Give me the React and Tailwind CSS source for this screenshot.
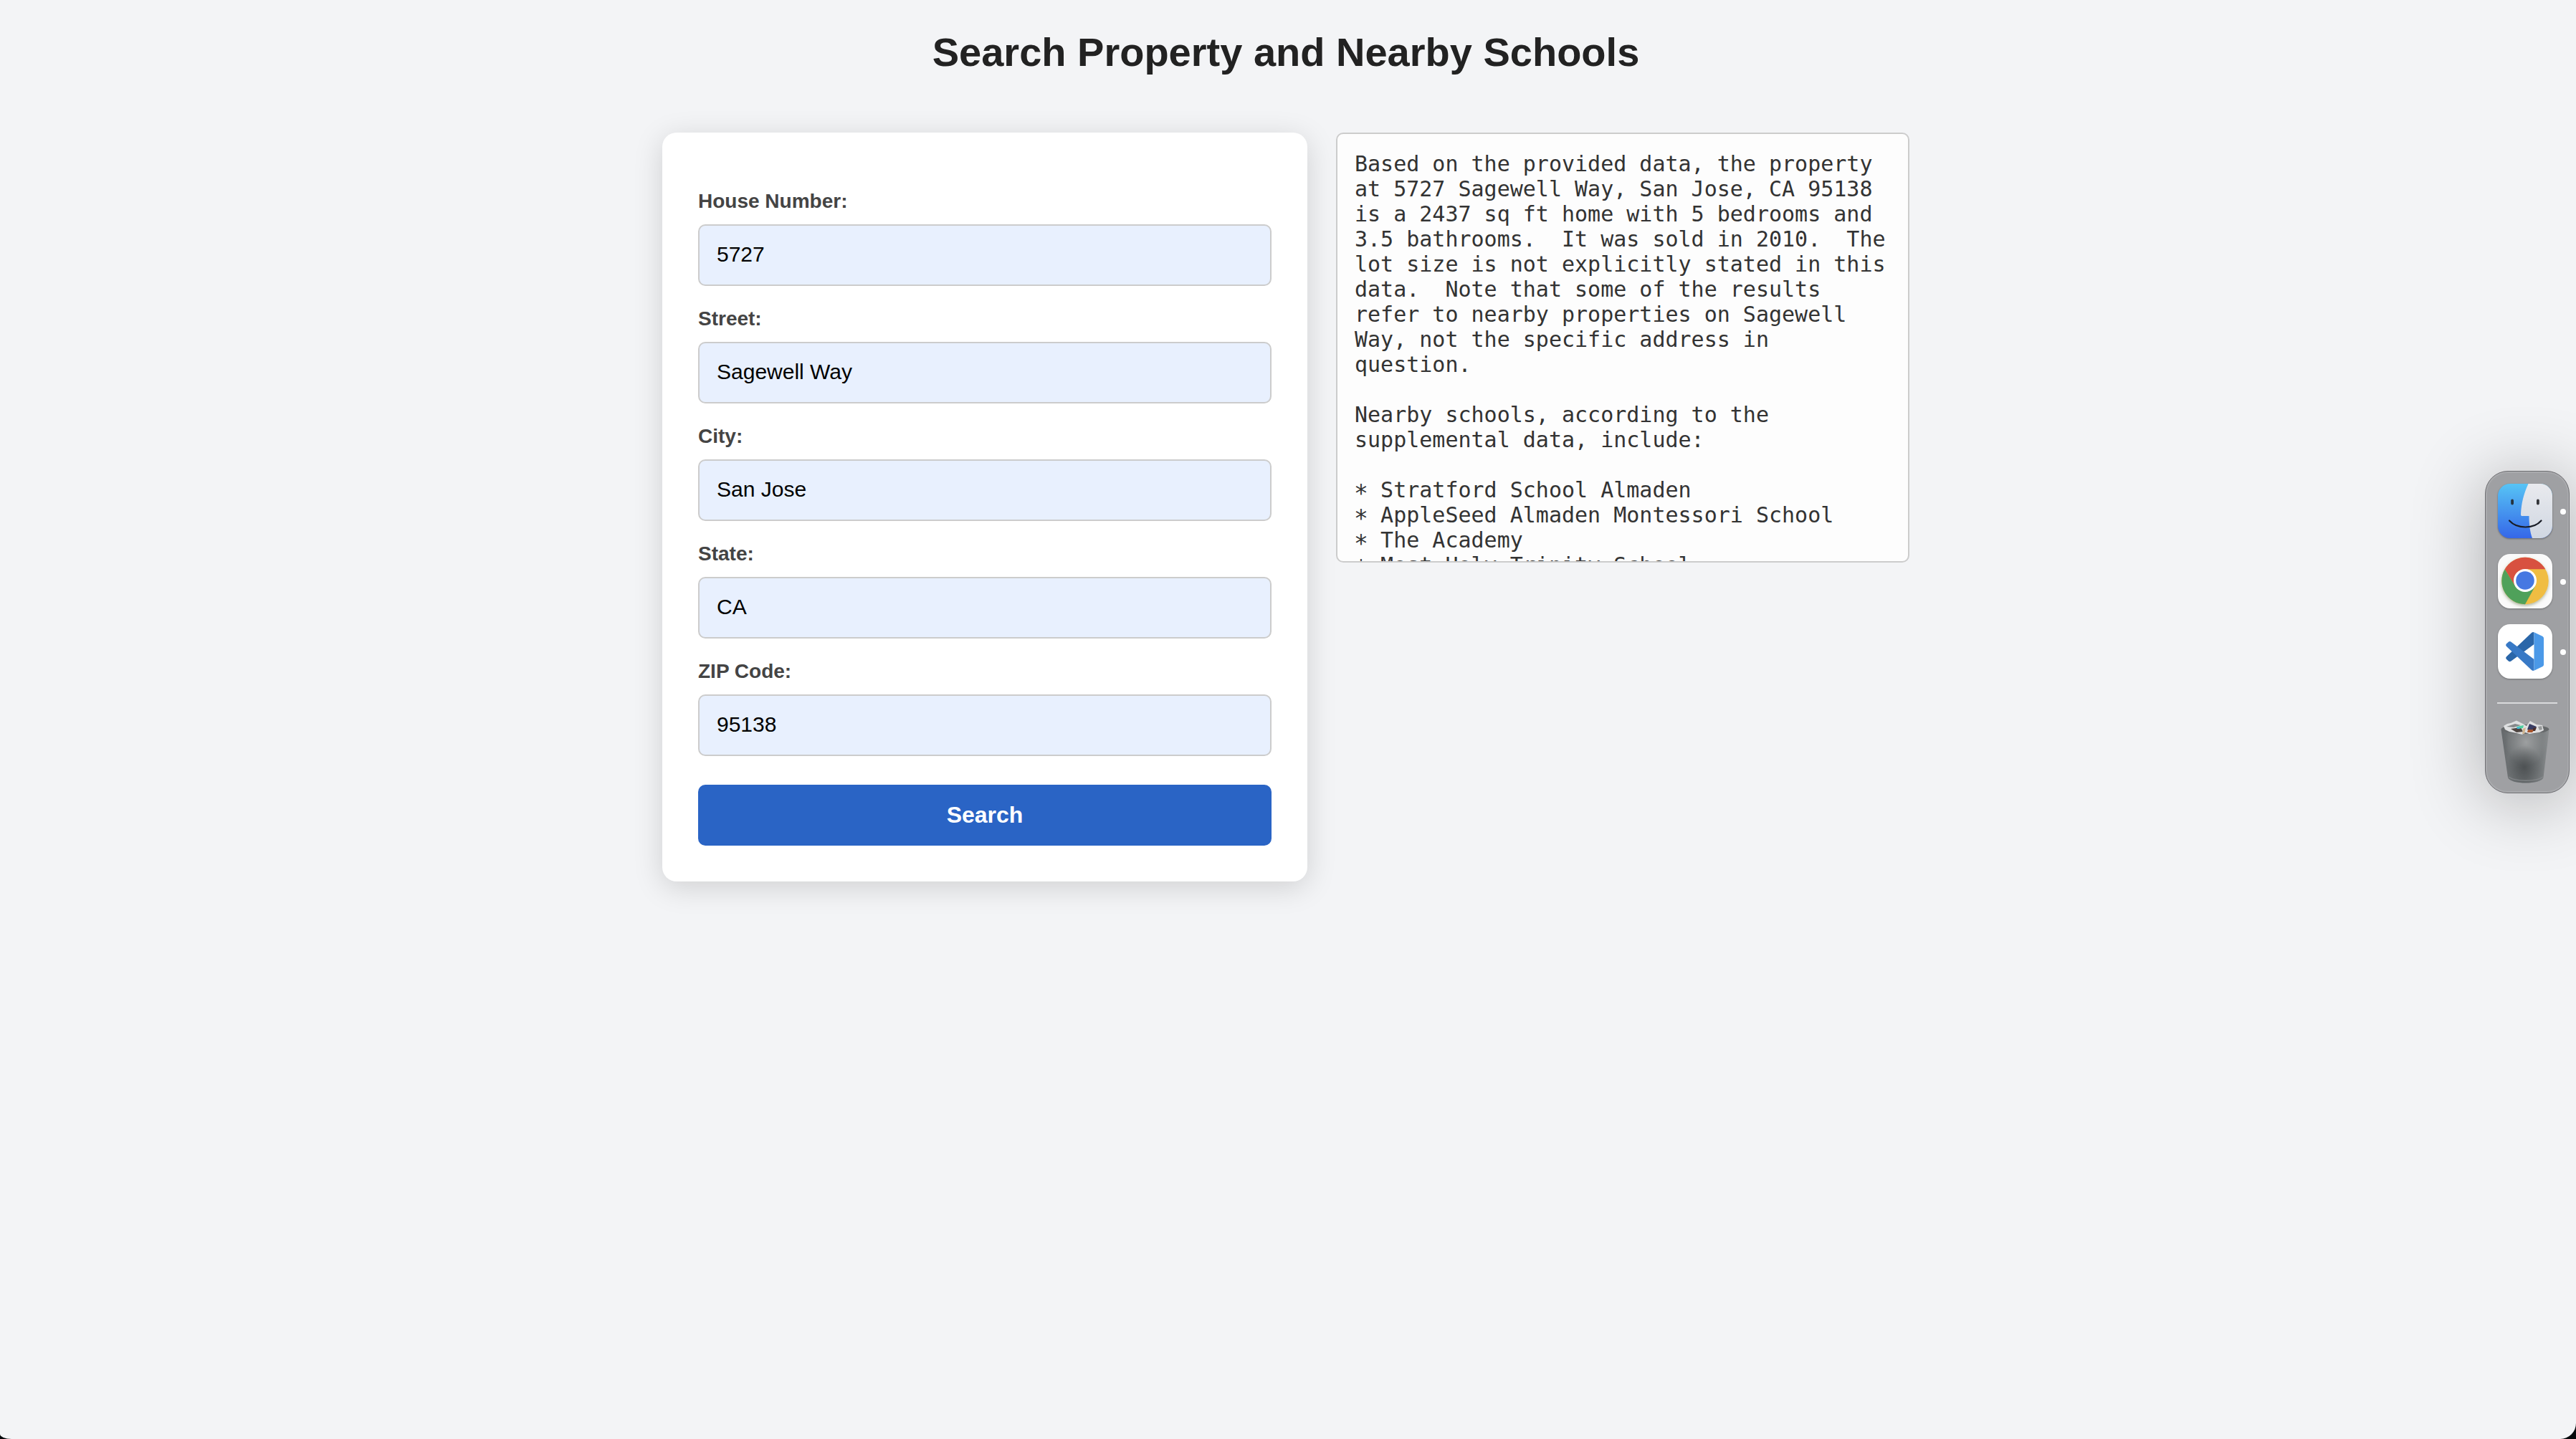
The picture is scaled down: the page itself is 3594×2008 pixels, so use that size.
import React from "react";

const FIELDS = [
  ["House Number:", "5727"],
  ["Street:", "Sagewell Way"],
  ["City:", "San Jose"],
  ["State:", "CA"],
  ["ZIP Code:", "95138"],
];

const SUMMARY = `Based on the provided data, the property
at 5727 Sagewell Way, San Jose, CA 95138
is a 2437 sq ft home with 5 bedrooms and
3.5 bathrooms.  It was sold in 2010.  The
lot size is not explicitly stated in this
data.  Note that some of the results
refer to nearby properties on Sagewell
Way, not the specific address in
question.

Nearby schools, according to the
supplemental data, include:

`;

const SCHOOLS = [
  "Stratford School Almaden",
  "AppleSeed Almaden Montessori School",
  "The Academy",
  "Most Holy Trinity School",
];

function FinderIcon() {
  return (
    <svg viewBox="0 0 76 76" className="size-[76px] drop-shadow-[0_1px_1px_rgba(0,0,0,0.35)]">
      <defs>
        <linearGradient id="finderBlue" x1="0" y1="0" x2="0" y2="1">
          <stop offset="0" stopColor="#57c4f5" />
          <stop offset="1" stopColor="#3567e8" />
        </linearGradient>
        <linearGradient id="finderGray" x1="0" y1="0" x2="0" y2="1">
          <stop offset="0" stopColor="#e9eaee" />
          <stop offset="1" stopColor="#d0d7e2" />
        </linearGradient>
        <clipPath id="finderClip">
          <rect width="76" height="76" rx="17" />
        </clipPath>
      </defs>
      <g clipPath="url(#finderClip)">
        <rect width="76" height="76" fill="url(#finderBlue)" />
        <path d="M42.500 0C36 14 32.500 28 32 42.500C32 44.500 32.500 45 34 45H43.500C43.500 57 45 68 48 76H76V0Z" fill="url(#finderGray)" />
      </g>
      <rect x="18.200" y="21.500" width="3.800" height="8" rx="1.900" fill="#26333f" />
      <rect x="54" y="21.500" width="3.800" height="8" rx="1.900" fill="#333539" />
      <path d="M16 51.500C27 63.500 50 63.500 60.500 51.500" fill="none" stroke="#191d26" strokeWidth="2.200" strokeLinecap="round" />
    </svg>
  );
}

function ChromeIcon() {
  return (
    <svg viewBox="0 0 76 76" className="size-[76px] drop-shadow-[0_1px_1px_rgba(0,0,0,0.3)]">
      <defs>
        <filter id="chromeShade" x="-30%" y="-30%" width="160%" height="160%">
          <feDropShadow dx="0" dy="2" stdDeviation="2" floodColor="#5b6a3a" floodOpacity="0.5" />
        </filter>
      </defs>
      <rect width="76" height="76" rx="17" fill="#fafafa" />
      <g filter="url(#chromeShade)">
        <circle cx="38" cy="37.500" r="32.700" fill="#f0bd42" />
        <path d="M9.700 21.150A32.700 32.700 0 0 1 66.300 21.150H38L24 45Z" fill="#d85141" />
        <path d="M9.700 21.150L24.200 45L37.500 53L52 45L38 70.200A32.700 32.700 0 0 1 9.700 21.150Z" fill="#50a15a" />
      </g>
      <circle cx="38" cy="37" r="16" fill="#fff" />
      <circle cx="38" cy="37" r="12.800" fill="#4678e2" />
    </svg>
  );
}

function CodeIcon() {
  return (
    <svg viewBox="0 0 76 76" className="size-[76px] drop-shadow-[0_1px_1px_rgba(0,0,0,0.3)]">
      <rect width="76" height="76" rx="17" fill="#fff" />
      <path d="M50.500 11.500V28L18.500 51.500Q16.500 53 14.500 51.200L11.800 48.800Q10.200 47 12 45.200L47 12Q49 10.500 50.500 11.500Z" fill="#2a66a9" />
      <path d="M50.500 64.500V49L18.500 24.700Q16.500 23.300 14.500 25L11.800 27.400Q10.200 29.200 12 31L47 64Q49 65.500 50.500 64.500Z" fill="#3879c6" />
      <path d="M50.500 11.200L62.500 17Q64 18 64 19.500V56.500Q64 58 62.500 59L50.500 64.800Z" fill="#4b99e8" />
    </svg>
  );
}

function TrashIcon() {
  return (
    <svg viewBox="0 0 68 90" className="h-[90px] w-[68px]">
      <defs>
        <linearGradient id="binBody" x1="0" y1="0" x2="1" y2="0">
          <stop offset="0" stopColor="#63676a" />
          <stop offset="0.150" stopColor="#6f7375" />
          <stop offset="0.500" stopColor="#6a6e70" />
          <stop offset="0.850" stopColor="#777b7d" />
          <stop offset="1" stopColor="#8d9092" />
        </linearGradient>
        <radialGradient id="binLight" cx="0.520" cy="0.280" r="0.420">
          <stop offset="0" stopColor="#a6a8a9" stopOpacity="0.850" />
          <stop offset="1" stopColor="#a6a8a9" stopOpacity="0" />
        </radialGradient>
        <radialGradient id="binDark" cx="0.480" cy="0.720" r="0.380">
          <stop offset="0" stopColor="#45494b" stopOpacity="0.750" />
          <stop offset="1" stopColor="#45494b" stopOpacity="0" />
        </radialGradient>
      </defs>
      <path d="M0.500 13C1 7 67 7 67.500 13L59.500 80C57 90 13 90 10 80Z" fill="url(#binBody)" />
      <path d="M0.500 13C1 7 67 7 67.500 13L59.500 80C57 90 13 90 10 80Z" fill="url(#binLight)" />
      <path d="M0.500 13C1 7 67 7 67.500 13L59.500 80C57 90 13 90 10 80Z" fill="url(#binDark)" />
      <path d="M11 79C20 86 50 86 59 79" fill="none" stroke="#8b8f91" strokeWidth="1.500" opacity="0.700" />
      <ellipse cx="34" cy="12.500" rx="33.300" ry="6.500" fill="#66696b" />
      <path d="M4 8L9 5L14 4L22 0.500L31 5L36 8L41 1L50 6L58 7L60 14L54 17L47 18L40 19L34 17L30 20L22 18L12 16L6 13Z" fill="#dfe0e1" />
      <path d="M8 9L20 5L28 7L18 10Z" fill="#85888a" />
      <path d="M14 12L28 10L31 16L22 17Z" fill="#4f4642" />
      <path d="M22 9L32 7L31 11L24 12Z" fill="#4fd1a0" />
      <path d="M22 10L27 9.500L26 12L23 12Z" fill="#45b5dd" />
      <path d="M31 12L35 10L33 19L30 19Z" fill="#cfb590" />
      <path d="M40 5L50 9L46 15L37 13Z" fill="#393d63" />
      <path d="M38 13L47 13L44 17L37 17Z" fill="#a7552d" />
      <path d="M45 11L50 10L48 15L45 15Z" fill="#4a2f2b" />
      <path d="M52 9L57 8L58 13L54 14Z" fill="#97999a" />
    </svg>
  );
}

function DockItem({ children }) {
  return (
    <div className="flex h-[98px] items-start">
      {children}
      <span className="mt-[35px] ml-[11px] size-2 rounded-full bg-white" />
    </div>
  );
}

function Dock() {
  return (
    <aside className="absolute top-[657px] right-[9px] flex h-[450px] w-[118px] flex-col rounded-[32px] border border-[#6f6f73] bg-[#9fa0a3] pt-[17px] pl-[17px] shadow-[inset_0_0_0_2px_#a9aaad,0_10px_100px_rgba(0,0,0,0.30)]">
      <DockItem><FinderIcon /></DockItem>
      <DockItem><ChromeIcon /></DockItem>
      <DockItem><CodeIcon /></DockItem>
      <div className="mt-[11px] -ml-px h-0.5 w-[84px] shrink-0 bg-[#d9dadc]" />
      <div className="mt-[23px] ml-1"><TrashIcon /></div>
    </aside>
  );
}

export default function App() {
  return (
    <div className="bg-[#05090b] font-['Liberation_Sans',Arial,sans-serif]">
      <div className="relative h-[2008px] w-[3594px] overflow-hidden rounded-br-[22px] rounded-bl-[16px_7px] bg-[#f3f4f6] pr-1.5">
        <h1 className="pt-[41px] text-center text-[56px] leading-[64px] font-bold text-[#222]">
          Search Property and Nearby Schools
        </h1>
        <main className="mt-20 flex items-start justify-center gap-10">
          <form className="flex h-[1045px] w-[900px] flex-col rounded-[20px] bg-white px-[50px] pt-[79px] shadow-[0_8px_40px_rgba(0,0,0,0.15)]">
            {FIELDS.map(([label, value]) => (
              <label key={label} className="flex h-[164px] flex-col">
                <span className="text-[28px] leading-[34px] font-bold text-[#444]">{label}</span>
                <input
                  readOnly
                  value={value}
                  className="mt-[15px] h-[86px] w-full rounded-[10px] border-2 border-[#ccc] bg-[#e8f0fe] px-6 pb-0.5 text-[30px] text-black outline-none"
                />
              </label>
            ))}
            <button type="button" className="mt-[11px] h-[85px] w-full rounded-[10px] bg-[#2a64c5] pb-0.5 text-[32px] font-bold text-white">
              Search
            </button>
          </form>
          <pre className="h-[600px] w-[800px] overflow-hidden rounded-[10px] border-2 border-[#ccc] bg-[#fdfdfd] p-6 font-['DejaVu_Sans_Mono',monospace] text-[30px] leading-[35px] text-[#333]">
            {SUMMARY}
            {SCHOOLS.map((school) => (
              <React.Fragment key={school}>
                <span className="inline-block translate-y-[5px] scale-110 leading-none">*</span>
                {` ${school}\n`}
              </React.Fragment>
            ))}
          </pre>
        </main>
        <Dock />
      </div>
    </div>
  );
}
